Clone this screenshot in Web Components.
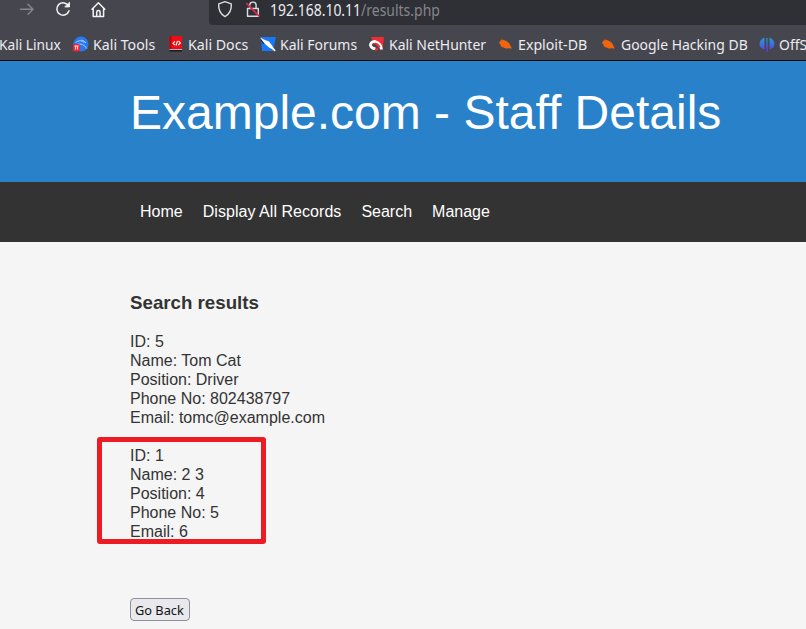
<!DOCTYPE html>
<html lang="en">
<head>
<meta charset="utf-8">
<title>Example.com - Staff Details</title>
<style>
html,body{margin:0;height:100%;overflow:hidden}
body{background:#f5f5f5;color:#333;font:16px/19px "Liberation Sans",Arial,sans-serif}
</style>
</head>
<body>
<template id="t-toolbar">
<style>
:host{display:block;height:60px;background:#46464e;border-bottom:1px solid #0c0c0d;overflow:hidden;color:#ececf0;font-family:"Noto Sans",sans-serif}
.nav{display:flex;height:25px}
.buttons{display:flex;width:209px;flex:none}
.buttons svg{width:120px;height:25px}
.url{flex:1;display:flex;background:#2f3035;border-bottom-left-radius:4px}
.url svg{width:61px;height:25px;flex:none}
.url div{font-size:15.7px;line-height:21px;white-space:pre;transform:scaleX(.89);transform-origin:0 0}
.url i{font-style:normal;color:#85858b}
.marks{display:flex;height:35px;align-items:center;padding-top:3px;box-sizing:border-box}
</style>
<div class="nav">
<div class="buttons"><svg viewBox="0 0 120 25" fill="none" stroke="#f4f4f7" stroke-width="1.5" stroke-linecap="round" stroke-linejoin="round">
<path stroke="#85858c" d="M20.5 9.3H33M28 4.3l5 5-5 5"/>
<path d="M68.600 6.200A6.200 6.200 0 1 0 69 10.800"/><path d="M69.400 2.700v4.200h-4.200z" fill="#f4f4f7" stroke-width="1"/>
<path d="M92 9.200l6.400-6.400 6.400 6.400M93.200 8.300v8.200h10.400V8.300M96.700 16.300v-4.100q0-1.700 1.700-1.700t1.700 1.700v4.100"/></svg></div>
<div class="url"><svg viewBox="0 0 61 25" fill="none" stroke="#dcdce0" stroke-width="1.4" stroke-linecap="round" stroke-linejoin="round">
<path d="M16 1.600l6.300 2.200c.4 5.700-1.300 10-6.300 12.800C11 13.800 9.300 9.500 9.700 3.800z"/>
<path d="M40.700 8V5.300a3.200 3.200 0 0 1 6.400 0V8M38.500 8.500h10.800v7.700H38.500z"/><path stroke="#e22850" stroke-width="1.7" d="M37.800 3.700L50 16"/></svg><div>192.168.10.11<i>/results.php</i></div></div>
</div>
<div class="marks"><slot></slot></div>
</template>
<template id="t-mark">
<style>
:host{display:flex;flex:none;align-items:center;width:var(--w);font-size:15px;line-height:20px;white-space:nowrap}
svg{width:16px;height:16px;margin-right:4px;flex:none}
.label{transform:scaleX(var(--s,.93));transform-origin:0 0}
:host(:first-child) .label{margin-left:-1px;--s:.915}
:host(:nth-child(2)) .label,:host(:nth-child(3)) .label,:host(:nth-child(6)) .label{--s:.945}
</style>
<span class="ic"></span><span class="label"><slot></slot></span>
</template>
<template id="t-banner">
<style>:host{display:block;height:121px;background:#2981c9;color:#fff;box-sizing:border-box;padding:24px 0 0 130px}
h1{margin:0;font-size:48px;line-height:55px;font-weight:400;white-space:nowrap}</style><h1><slot></slot></h1>
</template>
<template id="t-menu">
<style>:host{display:flex;height:60px;box-sizing:border-box;padding-bottom:2px;background:#333;color:#fff;align-items:center;gap:20px;padding-left:140px}
::slotted(:nth-child(2)){letter-spacing:.045px}</style><slot></slot>
</template>
<template id="t-record">
<style>:host{display:block;position:relative;margin-bottom:19px;white-space:pre-line;height:95px}
:host([marked])::after{content:"";position:absolute;left:-33px;top:-9px;width:159px;height:97px;border:5px solid #ed1c24;border-radius:3px}</style><slot></slot></template>
<template id="t-results">
<style>:host{display:block;padding:50px 0 0 130px}
h3{margin:0 0 18px;font-size:18.72px;line-height:22px}
button{display:block;margin-top:57px;width:60px;height:23px;padding:1px 0 0;border:1px solid #8f8f9d;border-radius:4px;background:#e9e9ed;color:#111;font:13.3px/19px "Noto Sans",sans-serif;white-space:nowrap}
button span{display:inline-block;margin:0 -4px 0 -5px;transform:scaleX(.96)}</style>
<h3>Search results</h3><slot></slot><button><span>Go Back</span></button>
</template>

<script>
const icons={
tools:'<circle cx="8" cy="8" r="7.500" fill="#2878ee"/><path d="M2.500 6.500q5-3.500 9 0M3 8.700q7-2.500 11 4M8 4q3 .5 5 3" fill="none" stroke="#a9ceff" stroke-width="1"/><rect x="0" y="8" width="7" height="7.500" rx="2" fill="#ef2637"/><path d="M1.500 10h4M2.700 10v3.500M4.600 10v3.500" stroke="#fff" stroke-width=".9"/>',
docs:'<path d="M1.500 0H14v13H1.500z" fill="#f00c12"/><path d="M1.500 0h2v13h-2z" fill="#b5080d"/><path d="M1.500 13H14v2.500H1.500z" fill="#151b28"/><path d="M1.500 13H14v.8H1.500z" fill="#ddd"/><path d="M7 5.300L5 7.200l2 1.900M10.500 4.800L12.300 7l-2 2M9.500 5L8 9.500" fill="none" stroke="#fff" stroke-width="1.100"/>',
forums:'<path d="M1 1h15l-3 14H2z" fill="#1679fb"/><path d="M0 1.500l5 2.500 4 1.500 3 4 2 4.500-5-2.500-4.500-4z" fill="#fff"/><path d="M1 4l3 4" stroke="#17283d" stroke-width="1.100"/><path d="M10 9l5 6" stroke="#fff" stroke-width="1.800"/>',
hunter:'<path d="M2 1h13l-1 9-2 4-8-8z" fill="#f12b34"/><path d="M12.500 13.500Q12 7 6 5.500 1 6 1.500 9.500 3 13 6.500 12.500" fill="none" stroke="#fff" stroke-width="2.800"/><path d="M4 8q4-2 7 3" fill="none" stroke="#f12b34" stroke-width="1.200"/><path d="M6 14.500l3-2" stroke="#f12b34" stroke-width="2"/>',
bug:'<path d="M1 7l1.500-2.500 2.500-.8 3.300 1.300 2.700 2 1.300 2.600 1.500 3-3-.3-2.800.2-3-1-2.600-1.400.5-1.200z" fill="#f4640c"/><path d="M5 4L3 3M6 11l-1.500 1" stroke="#a84a21" stroke-width=".8"/>',
off:'<defs><linearGradient id="g" gradientUnits="userSpaceOnUse" x1="0" y1="1" x2="0" y2="15"><stop stop-color="#1aa7d8"/><stop offset="1" stop-color="#6439e8"/></linearGradient></defs><path d="M5.500 1.500v12Q.5 12 .5 8t5-6.500zM7.400 2h1.200v14H7.400zM10.500 1.500q5 2.500 5 6.500t-5 5.500z" fill="url(#g)"/>'
};
function define(name,id,setup){
  customElements.define(name,class extends HTMLElement{
    constructor(){super();this.attachShadow({mode:"open"}).append(document.getElementById(id).content.cloneNode(true));}
    connectedCallback(){if(setup)setup(this)}
  });
}
define("browser-toolbar","t-toolbar");
define("bookmark-link","t-mark",el=>{
  el.style.setProperty("--w",el.getAttribute("w")+"px");
  const s=el.shadowRoot.querySelector(".ic"),n=el.getAttribute("icon");
  s.style.display="flex";
  if(n)s.innerHTML='<svg viewBox="0 0 16 16">'+icons[n]+'</svg>';
});
define("page-banner","t-banner");
define("page-menu","t-menu");
customElements.define("staff-record",class extends HTMLElement{
  constructor(){
    super();
    this.attachShadow({mode:"open"}).append(document.getElementById("t-record").content.cloneNode(true));
    const r=this.shadowRoot;
    [...r.childNodes].forEach(n=>{if(n.nodeType===3)n.remove()});
  }
});
define("search-results","t-results");
</script>
<browser-toolbar><bookmark-link w="73">Kali Linux</bookmark-link><bookmark-link w="95" icon="tools">Kali Tools</bookmark-link><bookmark-link w="92" icon="docs">Kali Docs</bookmark-link><bookmark-link w="109" icon="forums">Kali Forums</bookmark-link><bookmark-link w="129" icon="hunter">Kali NetHunter</bookmark-link><bookmark-link w="103" icon="bug">Exploit-DB</bookmark-link><bookmark-link w="158" icon="bug">Google Hacking DB</bookmark-link><bookmark-link w="47" icon="off">OffS</bookmark-link></browser-toolbar>
<page-banner>Example.com - Staff Details</page-banner>
<page-menu><span>Home</span><span>Display All Records</span><span>Search</span><span>Manage</span></page-menu>
<search-results><staff-record>ID: 5
Name: Tom Cat
Position: Driver
Phone No: 802438797
Email: tomc@example.com</staff-record><staff-record marked>ID: 1
Name: 2 3
Position: 4
Phone No: 5
Email: 6</staff-record></search-results>
</body>
</html>
